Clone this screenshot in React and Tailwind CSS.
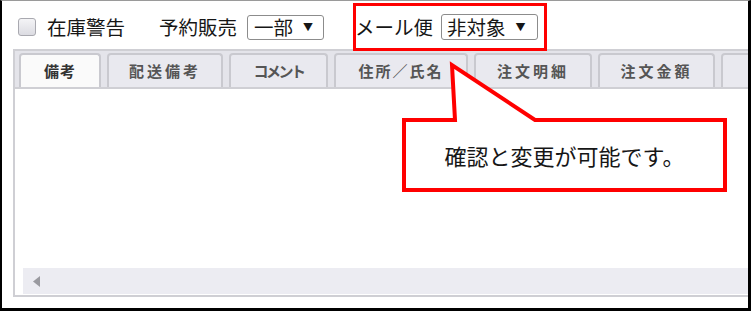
import React from "react";

const jp = { fontFamily: '"Noto Sans CJK JP", "Noto Sans", sans-serif' };

function Tab({ label, w, active, spacing }) {
  return (
    <div
      className={`flex h-[34px] shrink-0 items-center justify-center rounded-t-[4px] border-2 border-b-0 border-[#c9c9cf] text-[15px] font-bold ${
        active ? "bg-[#fafafa] text-[#333333]" : "bg-[#e9e9ef] text-[#555555]"
      }`}
      style={{ width: w, letterSpacing: spacing }}
    >
      {label}
    </div>
  );
}

export default function App() {
  return (
    <div
      className="relative h-[311px] w-[751px] overflow-hidden border-b-[3px] border-l-2 border-r-[3px] border-t border-b-black border-l-black border-r-black border-t-[#9a9a9a] bg-white text-[#161616]"
      style={jp}
    >
      {/* top row */}
      <div className="flex h-[48px] items-center pl-[16px] pt-[4px] text-[19.5px] leading-none">
        <div className="h-[18px] w-[18px] rounded-[3px] border border-[#a9a9b0] bg-gradient-to-b from-[#f4f4f6] to-[#dcdce2]" />
        <span className="ml-[11px]">在庫警告</span>
        <span className="ml-[34px]">予約販売</span>
        <div className="ml-[10px] flex h-[25px] w-[77px] items-center rounded-[3px] border border-[#8c8c8c] pl-[6px]">
          <span>一部</span>
          <span className="ml-[10px] text-[10px]">▼</span>
        </div>
        <span className="ml-[31px]">メール便</span>
        <div className="ml-[8px] flex h-[26px] w-[97px] items-center rounded-[3px] border border-[#8c8c8c] pl-[5px]">
          <span>非対象</span>
          <span className="ml-[10px] text-[10px]">▼</span>
        </div>
      </div>

      {/* tabs strip */}
      <div className="ml-[11px] flex h-[40px] items-end gap-[6px] border-2 border-b-2 border-r-0 border-[#cfcfd4] bg-[#e4e4ea] pl-[4px]">
        <Tab label="備考" w={82} active spacing="1px" />
        <Tab label="配送備考" w={116} spacing="3px" />
        <Tab label="コメント" w={99} spacing="-2.5px" />
        <Tab label="住所／氏名" w={134} spacing="2px" />
        <Tab label="注文明細" w={118} spacing="3px" />
        <Tab label="注文金額" w={117} spacing="3px" />
        <Tab label="" w={60} />
      </div>

      {/* content panel */}
      <div className="ml-[11px] flex h-[208px] flex-col justify-end border-b-2 border-l-2 border-[#cfcfd4] pb-[1px] pl-[8px]">
        <div className="flex h-[26px] items-center bg-[#ececf2] pl-[10px]">
          <svg width="7" height="11" viewBox="0 0 7 11">
            <polygon points="7,0 0,5.5 7,11" fill="#9a9aa0" />
          </svg>
        </div>
      </div>

      {/* annotation: red box */}
      <div className="pointer-events-none absolute left-[351px] top-[2px] h-[48px] w-[194px] border-[3px] border-[#ff0000]" />

      {/* annotation: callout */}
      <svg
        className="pointer-events-none absolute left-0 top-0"
        width="751"
        height="311"
        viewBox="0 0 751 311"
      >
        <polygon
          points="402,119 453,119 450,64 533,119 723,119 723,189 402,189"
          fill="#ffffff"
          stroke="#ff0000"
          strokeWidth="4"
          strokeLinejoin="miter"
        />
      </svg>
      <div className="absolute left-[402px] top-[119px] flex h-[70px] w-[321px] items-center justify-center text-[22px] leading-none text-[#161616]">
        確認と変更が可能です。
      </div>
    </div>
  );
}
